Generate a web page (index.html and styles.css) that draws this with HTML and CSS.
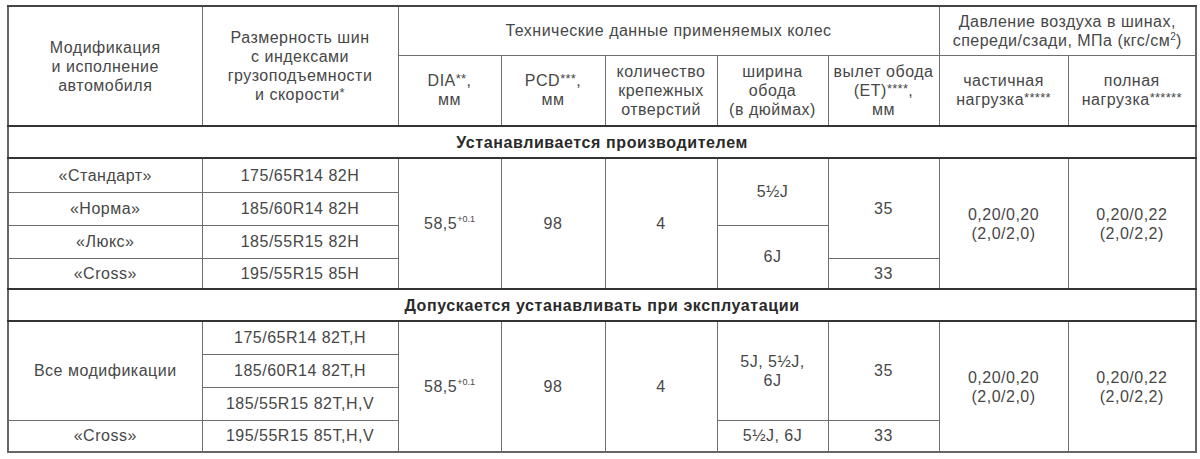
FILE: index.html
```html
<!DOCTYPE html>
<html lang="ru">
<head>
<meta charset="utf-8">
<title>Шины и колеса</title>
<link rel="stylesheet" href="styles.css">
</head>
<body>
<table class="spec">
  <colgroup>
    <col class="c1"><col class="c2"><col class="c3"><col class="c4"><col class="c5"><col class="c6"><col class="c7"><col class="c8"><col class="c9">
  </colgroup>
  <thead>
    <tr class="h1">
      <th rowspan="2">Модификация<br>и исполнение<br>автомобиля</th>
      <th rowspan="2">Размерность шин<br>с индексами<br>грузоподъемности<br>и скорости<sup>*</sup></th>
      <th colspan="5">Технические данные применяемых колес</th>
      <th colspan="2">Давление воздуха в шинах,<br>спереди/сзади, МПа (кгс/см<sup class="sq">2</sup>)</th>
    </tr>
    <tr class="h2">
      <th>DIA<sup>**</sup>,<br>мм</th>
      <th>PCD<sup>***</sup>,<br>мм</th>
      <th>количество<br>крепежных<br>отверстий</th>
      <th>ширина<br>обода<br>(в дюймах)</th>
      <th>вылет обода<br>(ET)<sup>****</sup>,<br>мм</th>
      <th>частичная<br>нагрузка<sup>*****</sup></th>
      <th>полная<br>нагрузка<sup>******</sup></th>
    </tr>
  </thead>
  <tbody>
    <tr class="section"><td colspan="9">Устанавливается производителем</td></tr>
    <tr class="r34">
      <td>«Стандарт»</td>
      <td>175/65R14 82H</td>
      <td rowspan="4">58,5<sup class="tol">+0.1</sup></td>
      <td rowspan="4">98</td>
      <td rowspan="4">4</td>
      <td rowspan="2">5½J</td>
      <td rowspan="3">35</td>
      <td rowspan="4">0,20/0,20<br>(2,0/2,0)</td>
      <td rowspan="4">0,20/0,22<br>(2,0/2,2)</td>
    </tr>
    <tr class="r33">
      <td>«Норма»</td>
      <td>185/60R14 82H</td>
    </tr>
    <tr class="r33">
      <td>«Люкс»</td>
      <td>185/55R15 82H</td>
      <td rowspan="2">6J</td>
    </tr>
    <tr class="r31">
      <td>«Cross»</td>
      <td>195/55R15 85H</td>
      <td>33</td>
    </tr>
    <tr class="section"><td colspan="9">Допускается устанавливать при эксплуатации</td></tr>
    <tr class="r33">
      <td rowspan="3">Все модификации</td>
      <td>175/65R14 82T,H</td>
      <td rowspan="4">58,5<sup class="tol">+0.1</sup></td>
      <td rowspan="4">98</td>
      <td rowspan="4">4</td>
      <td rowspan="3">5J, 5½J,<br>6J</td>
      <td rowspan="3">35</td>
      <td rowspan="4">0,20/0,20<br>(2,0/2,0)</td>
      <td rowspan="4">0,20/0,22<br>(2,0/2,2)</td>
    </tr>
    <tr class="r33">
      <td>185/60R14 82T,H</td>
    </tr>
    <tr class="r33">
      <td>185/55R15 82T,H,V</td>
    </tr>
    <tr class="r32">
      <td>«Cross»</td>
      <td>195/55R15 85T,H,V</td>
      <td>5½J, 6J</td>
      <td>33</td>
    </tr>
  </tbody>
</table>
</body>
</html>
```

FILE: styles.css
```css
html, body {
  margin: 0;
  padding: 0;
  background: #ffffff;
}

body {
  padding: 5px 0 0 7px;
  font-family: "Liberation Sans", Arial, sans-serif;
  color: #474747;
}

.spec {
  border-collapse: collapse;
  table-layout: fixed;
  width: 1188px;
  border: 2px solid #666666;
  font-size: 16px;
  letter-spacing: 0.5px;
}

.c1 { width: 194px; }
.c2 { width: 196px; }
.c3 { width: 103px; }
.c4 { width: 104px; }
.c5 { width: 112px; }
.c6 { width: 111px; }
.c7 { width: 111px; }
.c8 { width: 129px; }
.c9 { width: 128px; }

.spec th,
.spec td {
  border: 1px solid #6e6e6e;
  text-align: center;
  vertical-align: middle;
  padding: 0 1px;
  line-height: 19px;
  font-weight: normal;
}

.spec thead tr:first-child th {
  border-top: 2px solid #444444;
}

.h1 { height: 49px; }
.h2 { height: 71px; }

.spec .section td {
  border-top: 2px solid #333333;
  border-bottom: 2px solid #333333;
  font-weight: bold;
  color: #2a2a2a;
  height: 30px;
  letter-spacing: 0.6px;
}

.r34 { height: 34px; }
.r33 { height: 33px; }
.r32 { height: 32px; }
.r31 { height: 31px; }

sup {
  font-size: 13px;
  line-height: 0;
  vertical-align: 3px;
  letter-spacing: 0.3px;
}

.sq {
  font-size: 10px;
  vertical-align: 6px;
}

.tol {
  font-size: 9px;
  vertical-align: 7px;
  letter-spacing: 0;
}
```
